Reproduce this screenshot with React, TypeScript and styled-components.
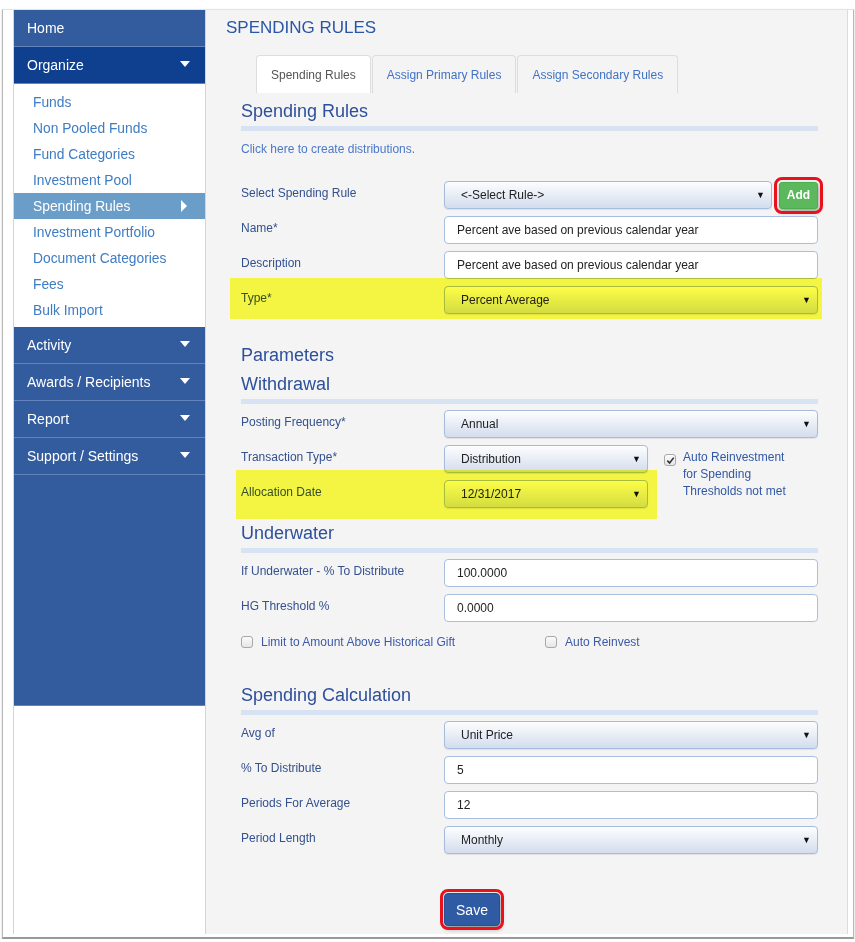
import React from 'react';
import styled, { createGlobalStyle } from 'styled-components';

const GlobalStyle = createGlobalStyle`
  html, body {
    margin: 0;
    padding: 0;
    background: #ffffff;
    font-family: "Liberation Sans", Arial, sans-serif;
  }
  * {
    box-sizing: border-box;
  }
`;

// outer window frame of the capture
const Frame = styled.div`
  margin: 9px 0 0 2px;
  width: 852px;
  height: 930px;
  border: 1px solid #b8b8b8;
  border-top-color: #e4e4e4;
  border-bottom: 2px solid #9a9a9a;
  padding: 0 5px 3px 10px;
  display: flex;
  box-shadow: 0 1px 2px rgba(0, 0, 0, 0.2);
`;

const Sidebar = styled.nav`
  width: 193px;
  flex-shrink: 0;
  background: #ffffff;
  border-left: 1px solid #c8d6ee;
  border-right: 1px solid #c8d6ee;
  display: flex;
  flex-direction: column;
`;

const NavItem = styled.div<{ $tone?: 'active' | 'normal' }>`
  height: 37px;
  display: flex;
  align-items: center;
  justify-content: space-between;
  padding: 0 15px 0 13px;
  background: ${p => (p.$tone === 'active' ? '#0f3f8f' : '#335c9f')};
  border-bottom: 1px solid #6384bb;
  color: #ffffff;
  font-size: 14px;
`;

const Caret = styled.span`
  width: 0;
  height: 0;
  border-left: 5px solid transparent;
  border-right: 5px solid transparent;
  border-top: 6px solid #ffffff;
  margin-top: -3px;
`;

const RightCaret = styled.span`
  width: 0;
  height: 0;
  border-top: 6px solid transparent;
  border-bottom: 6px solid transparent;
  border-left: 6px solid #ffffff;
  margin-right: 3px;
`;

const SubList = styled.div`
  padding: 5px 0 4px;
  display: flex;
  flex-direction: column;
`;

const SubLink = styled.div<{ $current?: boolean }>`
  height: 26px;
  display: flex;
  align-items: center;
  justify-content: space-between;
  padding: 0 15px 0 19px;
  font-size: 13.8px;
  color: ${p => (p.$current ? '#ffffff' : '#3e7cc4')};
  background: ${p => (p.$current ? '#6b9dc9' : 'transparent')};
`;

const SidebarFill = styled.div`
  height: 231px;
  background: #335c9f;
  border-bottom: 1px solid #6384bb;
`;

const Main = styled.main`
  flex: 1;
  background: #f4f4f4;
  border-right: 1px solid #dcdcdc;
  padding: 8px 29px 0 20px;
`;

const PageTitle = styled.h1`
  margin: 0;
  font-size: 17px;
  line-height: 20px;
  font-weight: normal;
  color: #2a55a6;
`;

const Tabs = styled.div`
  display: flex;
  gap: 1px;
  margin: 17px 0 0 30px;
`;

const Tab = styled.div<{ $active?: boolean }>`
  height: 38px;
  padding: 0 14px;
  display: flex;
  align-items: center;
  font-size: 12px;
  color: ${p => (p.$active ? '#555555' : '#4272c4')};
  background: ${p => (p.$active ? '#ffffff' : '#f4f4f4')};
  border: 1px solid #dddddd;
  border-bottom: none;
  border-radius: 4px 4px 0 0;
`;

const Form = styled.div`
  margin-left: 15px;
`;

const SectionTitle = styled.h3<{ $gap: number }>`
  margin: ${p => p.$gap}px 0 0;
  font-size: 18px;
  line-height: 22px;
  font-weight: normal;
  color: #2d4f9c;
`;

const Bar = styled.div`
  height: 5px;
  background: #d7e3f3;
  margin-top: 4px;
`;

const Link = styled.a`
  display: block;
  margin-top: 10px;
  font-size: 12px;
  line-height: 16px;
  color: #4b78c8;
  text-decoration: none;
`;

const Rows = styled.div<{ $gap: number }>`
  margin-top: ${p => p.$gap}px;
  display: flex;
  flex-direction: column;
  gap: 7px;
`;

const Row = styled.div<{ $mark?: [number, number, number, number] }>`
  position: relative;
  display: grid;
  grid-template-columns: 203px 1fr;
  align-items: start;

  ${p =>
    p.$mark
      ? `&::after {
    content: '';
    position: absolute;
    top: -${p.$mark[0]}px;
    right: -${p.$mark[1]}px;
    bottom: -${p.$mark[2]}px;
    left: -${p.$mark[3]}px;
    background: #ffff46;
    mix-blend-mode: multiply;
    pointer-events: none;
  }`
      : ''}
`;

const Label = styled.label`
  padding-top: 4px;
  font-size: 12px;
  line-height: 16px;
  color: #33508f;
`;

const Control = styled.div`
  display: flex;
  gap: 7px;
  align-items: center;
`;

const SelectBox = styled.div`
  flex: 1;
  height: 28px;
  display: flex;
  align-items: center;
  justify-content: space-between;
  padding: 0 6px 0 16px;
  font-size: 12px;
  color: #222222;
  background: linear-gradient(#fdfdfe, #d3ddee);
  border: 1px solid #a6bcdd;
  border-radius: 4px;
  box-shadow: 0 1px 1px rgba(0, 0, 0, 0.08);
`;

const Arrow = styled.span`
  font-size: 9px;
  color: #111111;
`;

const TextBox = styled.input`
  width: 100%;
  height: 28px;
  padding: 0 12px;
  font-family: inherit;
  font-size: 12px;
  color: #222222;
  background: #ffffff;
  border: 1px solid #a9bfe0;
  border-radius: 4px;
  outline: none;
`;

const AddButton = styled.button`
  width: 39px;
  height: 27px;
  border: 1px solid #4cae4c;
  border-radius: 3px;
  background: #5cb85c;
  color: #ffffff;
  font-family: inherit;
  font-size: 12px;
  font-weight: bold;
  outline: 3px solid #e8121c;
  outline-offset: 2px;
  box-shadow: 1px 3px 5px rgba(0, 0, 0, 0.35);
`;

const SplitGrid = styled.div`
  display: grid;
  grid-template-columns: 1fr 16px 154px;
`;

const SplitRows = styled.div`
  display: flex;
  flex-direction: column;
  gap: 7px;
  grid-column: 1;
`;

const CheckNote = styled.div`
  grid-column: 3;
  display: flex;
  gap: 7px;
  padding-top: 9px;
`;

const NoteText = styled.div`
  font-size: 12px;
  line-height: 17px;
  color: #3157a6;
  margin-top: -5px;
`;

const Box = styled.span`
  width: 12px;
  height: 12px;
  flex-shrink: 0;
  display: flex;
  align-items: center;
  justify-content: center;
  border: 1px solid #a8a8a8;
  border-radius: 3px;
  background: linear-gradient(#fbfbfb, #e6e6e6);
`;

const CheckRow = styled.div`
  margin-top: 12px;
  display: flex;
  align-items: center;
  height: 16px;
`;

const CheckItem = styled.div<{ $width?: number }>`
  display: flex;
  align-items: center;
  gap: 8px;
  width: ${p => (p.$width ? `${p.$width}px` : 'auto')};
  font-size: 12px;
  color: #3b5aa8;
`;

const Actions = styled.div`
  margin-top: 39px;
  padding-left: 203px;
`;

const SaveButton = styled.button`
  width: 56px;
  height: 33px;
  border: 1px solid #284f93;
  border-radius: 4px;
  background: #2f5aa4;
  color: #ffffff;
  font-family: inherit;
  font-size: 14px;
  outline: 3px solid #e8121c;
  outline-offset: 1px;
  box-shadow: 1px 3px 5px rgba(0, 0, 0, 0.4);
`;

const Check: React.FC<{ checked?: boolean }> = ({ checked }) => (
  <Box>
    {checked && (
      <svg width="9" height="9" viewBox="0 0 10 10">
        <path d="M1.5 5.2 L4 7.8 L8.6 1.8" fill="none" stroke="#333" strokeWidth="1.8" />
      </svg>
    )}
  </Box>
);

const Select: React.FC<{ value: string }> = ({ value }) => (
  <SelectBox>
    <span>{value}</span>
    <Arrow>▼</Arrow>
  </SelectBox>
);

const subLinks = [
  'Funds',
  'Non Pooled Funds',
  'Fund Categories',
  'Investment Pool',
  'Spending Rules',
  'Investment Portfolio',
  'Document Categories',
  'Fees',
  'Bulk Import',
];

const App: React.FC = () => {
  return (
    <>
      <GlobalStyle />
      <Frame>
        <Sidebar>
          <NavItem>Home</NavItem>
          <NavItem $tone="active">
            Organize <Caret />
          </NavItem>
          <SubList>
            {subLinks.map(link => (
              <SubLink key={link} $current={link === 'Spending Rules'}>
                {link}
                {link === 'Spending Rules' && <RightCaret />}
              </SubLink>
            ))}
          </SubList>
          {['Activity', 'Awards / Recipients', 'Report', 'Support / Settings'].map(item => (
            <NavItem key={item}>
              {item} <Caret />
            </NavItem>
          ))}
          <SidebarFill />
        </Sidebar>

        <Main>
          <PageTitle>SPENDING RULES</PageTitle>
          <Tabs>
            <Tab $active>Spending Rules</Tab>
            <Tab>Assign Primary Rules</Tab>
            <Tab>Assign Secondary Rules</Tab>
          </Tabs>

          <Form>
            <SectionTitle $gap={7}>Spending Rules</SectionTitle>
            <Bar />
            <Link>Click here to create distributions.</Link>

            <Rows $gap={24}>
              <Row>
                <Label>Select Spending Rule</Label>
                <Control>
                  <Select value="<-Select Rule->" />
                  <AddButton>Add</AddButton>
                </Control>
              </Row>
              <Row>
                <Label>Name*</Label>
                <TextBox defaultValue="Percent ave based on previous calendar year" />
              </Row>
              <Row>
                <Label>Description</Label>
                <TextBox defaultValue="Percent ave based on previous calendar year" />
              </Row>
              <Row $mark={[8, 4, 5, 11]}>
                <Label>Type*</Label>
                <Select value="Percent Average" />
              </Row>
            </Rows>

            <SectionTitle $gap={30}>Parameters</SectionTitle>
            <SectionTitle $gap={7}>Withdrawal</SectionTitle>
            <Bar />
            <Rows $gap={6}>
              <Row>
                <Label>Posting Frequency*</Label>
                <Select value="Annual" />
              </Row>
              <SplitGrid>
                <SplitRows>
                  <Row>
                    <Label>Transaction Type*</Label>
                    <Select value="Distribution" />
                  </Row>
                  <Row $mark={[10, 9, 11, 5]}>
                    <Label>Allocation Date</Label>
                    <Select value="12/31/2017" />
                  </Row>
                </SplitRows>
                <CheckNote>
                  <Check checked />
                  <NoteText>
                    Auto Reinvestment
                    <br />
                    for Spending
                    <br />
                    Thresholds not met
                  </NoteText>
                </CheckNote>
              </SplitGrid>
            </Rows>

            <SectionTitle $gap={14}>Underwater</SectionTitle>
            <Bar />
            <Rows $gap={6}>
              <Row>
                <Label>If Underwater - % To Distribute</Label>
                <TextBox defaultValue="100.0000" />
              </Row>
              <Row>
                <Label>HG Threshold %</Label>
                <TextBox defaultValue="0.0000" />
              </Row>
            </Rows>
            <CheckRow>
              <CheckItem $width={304}>
                <Check />
                Limit to Amount Above Historical Gift
              </CheckItem>
              <CheckItem>
                <Check />
                Auto Reinvest
              </CheckItem>
            </CheckRow>

            <SectionTitle $gap={34}>Spending Calculation</SectionTitle>
            <Bar />
            <Rows $gap={6}>
              <Row>
                <Label>Avg of</Label>
                <Select value="Unit Price" />
              </Row>
              <Row>
                <Label>% To Distribute</Label>
                <TextBox defaultValue="5" />
              </Row>
              <Row>
                <Label>Periods For Average</Label>
                <TextBox defaultValue="12" />
              </Row>
              <Row>
                <Label>Period Length</Label>
                <Select value="Monthly" />
              </Row>
            </Rows>

            <Actions>
              <SaveButton>Save</SaveButton>
            </Actions>
          </Form>
        </Main>
      </Frame>
    </>
  );
};

export default App;
